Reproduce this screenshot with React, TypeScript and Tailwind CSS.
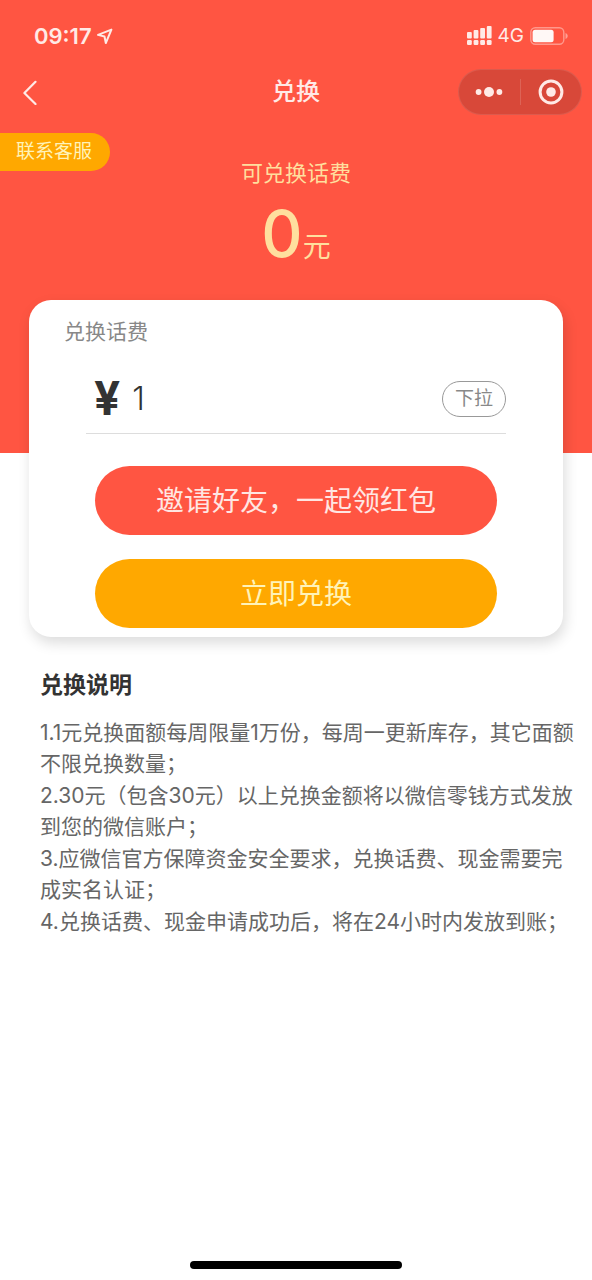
type Rule = {
  id: string;
  lines: string[];
};

const RULES: Rule[] = [
  { id: "stock", lines: ["1.1元兑换面额每周限量1万份，每周一更新库存，其它面额", "不限兑换数量；"] },
  { id: "wallet", lines: ["2.30元（包含30元）以上兑换金额将以微信零钱方式发放", "到您的微信账户；"] },
  { id: "verify", lines: ["3.应微信官方保障资金安全要求，兑换话费、现金需要完", "成实名认证；"] },
  { id: "arrival", lines: ["4.兑换话费、现金申请成功后，将在24小时内发放到账；"] }
];

function SignalIcon() {
  const bars = [
    { x: 0, y: 6, height: 6.4 },
    { x: 6.6, y: 4, height: 8.4 },
    { x: 13.2, y: 2, height: 10.4 },
    { x: 19.8, y: 0, height: 12.4 }
  ];
  return (
    <svg width="25" height="20" viewBox="0 0 25 20" fill="currentColor" aria-hidden="true">
      {bars.map((bar) => (
        <g key={bar.x}>
          <rect x={bar.x} y={bar.y} width="4.8" height={bar.height} rx="1" />
          <rect x={bar.x} y="14" width="4.8" height="5" rx="1.2" />
        </g>
      ))}
    </svg>
  );
}

function BatteryIcon() {
  return (
    <svg width="38" height="18" viewBox="0 0 38 18" fill="none" aria-hidden="true">
      <rect x="0.8" y="0.8" width="33" height="16.4" rx="4.5" stroke="currentColor" strokeOpacity="0.45" strokeWidth="1.4" />
      <rect x="2.6" y="2.8" width="21" height="12.4" rx="2.5" fill="#fff8f6" />
      <path d="M35.5 6v6c1.4-.6 2.2-1.7 2.2-3s-.8-2.4-2.2-3Z" fill="currentColor" fillOpacity="0.5" />
    </svg>
  );
}

function StatusBar() {
  return (
    <div className="flex h-[68px] items-center justify-between pt-1 pr-6 pl-[34px] text-[#ffeae6]">
      <div className="flex items-center gap-1">
        <span className="text-[22px] leading-8 font-semibold">09:17</span>
        <svg width="17" height="17" viewBox="0 0 17 17" fill="none" stroke="currentColor" strokeWidth="2" strokeLinejoin="round" aria-hidden="true">
          <path d="M15.4 1.6 2 6.9l6.5 1.6 1.3 6.6Z" />
        </svg>
      </div>
      <div className="flex items-center gap-1.5">
        <SignalIcon />
        <span className="text-[19px] leading-8">4G</span>
        <BatteryIcon />
      </div>
    </div>
  );
}

function NavBar() {
  return (
    <div className="grid h-12 grid-cols-3 items-center px-2.5">
      <button type="button" aria-label="返回" className="flex h-11 w-10 items-center justify-center text-[#ffeae6]">
        <svg width="16" height="26" viewBox="0 0 16 26" fill="none" stroke="currentColor" strokeWidth="2.2" aria-hidden="true">
          <path d="M13.5 2.8 2.4 14l11.1 11" strokeLinecap="round" strokeLinejoin="round" />
        </svg>
      </button>
      <h1 className="text-center text-2xl font-medium text-[#ffeae6]">兑换</h1>
      <div className="flex h-[46px] w-[124px] items-center justify-self-end rounded-full border border-white/10 bg-[#d84839] text-[#ffeae6]">
        <button type="button" aria-label="更多" className="flex flex-1 justify-center">
          <svg width="28" height="12" viewBox="0 0 28 12" fill="currentColor" aria-hidden="true">
            <circle cx="3.6" cy="6" r="2.9" />
            <circle cx="14" cy="6" r="5" />
            <circle cx="24.4" cy="6" r="2.9" />
          </svg>
        </button>
        <span className="h-[26px] w-px bg-white/15" />
        <button type="button" aria-label="关闭" className="flex flex-1 justify-center">
          <svg width="26" height="26" viewBox="0 0 26 26" fill="none" aria-hidden="true">
            <circle cx="13" cy="13" r="10.9" stroke="currentColor" strokeWidth="3" />
            <circle cx="13" cy="13" r="4.8" fill="currentColor" />
          </svg>
        </button>
      </div>
    </div>
  );
}

function ExchangeCard() {
  return (
    <section className="relative mx-[29px] -mt-[153px] rounded-[22px] bg-white pb-[9px] shadow-[2px_6px_14px_rgba(0,0,0,0.14)]">
      <h2 className="px-[35px] pt-4 text-[21px] leading-8 text-[#888888]">兑换话费</h2>
      <div className="mx-[57px] mt-4 flex h-[70px] items-center border-b border-[#dddddd] text-[#333333]">
        <label htmlFor="amount" className="pl-2 text-[46px] font-bold">
          ¥
        </label>
        <input id="amount" className="ml-3 w-full min-w-0 flex-1 text-[32px] font-light outline-none" defaultValue="1" />
        <button type="button" className="h-9 w-16 rounded-full border border-[#999999] text-[19px] leading-8 text-[#888888]">
          下拉
        </button>
      </div>
      <div className="mt-8 flex flex-col gap-6 px-[66px] text-[28px]">
        <button type="button" className="h-[69px] rounded-full bg-[#ff5542] text-[#ffe6e2]">
          邀请好友，一起领红包
        </button>
        <button type="button" className="h-[69px] rounded-full bg-[#ffa800] text-[#fff3b8]">
          立即兑换
        </button>
      </div>
    </section>
  );
}

export default function App() {
  return (
    <main className="flex min-h-screen flex-col bg-white font-[Inter,'Noto_Sans_CJK_SC',sans-serif]">
      <header className="bg-[#ff5542] pb-[161px]">
        <StatusBar />
        <NavBar />
        <button type="button" className="mt-[17px] block h-[38px] rounded-r-full bg-[#ffa800] pr-[18px] pl-4 text-[19px] text-[#fff3b8]">
          联系客服
        </button>
        <div className="-mt-3.5 text-center text-[#ffdf9e]">
          <p className="text-[22px] leading-8">可兑换话费</p>
          <p className="text-[28px] leading-[90px]">
            <span className="text-[64px] font-medium">0</span>元
          </p>
        </div>
      </header>

      <ExchangeCard />

      <section className="pt-8 pl-10">
        <h2 className="text-[23px] leading-8 font-bold text-[#333333]">兑换说明</h2>
        <ol className="mt-4 flex flex-col gap-px text-[21px] leading-[31px] text-[#666666]">
          {RULES.map((rule) => (
            <li key={rule.id}>
              {rule.lines.map((line) => (
                <span key={line} className="block whitespace-nowrap">
                  {line}
                </span>
              ))}
            </li>
          ))}
        </ol>
      </section>

      <div className="mx-auto mt-auto mb-[11px] h-2 w-[212px] rounded-full bg-black" />
    </main>
  );
}
